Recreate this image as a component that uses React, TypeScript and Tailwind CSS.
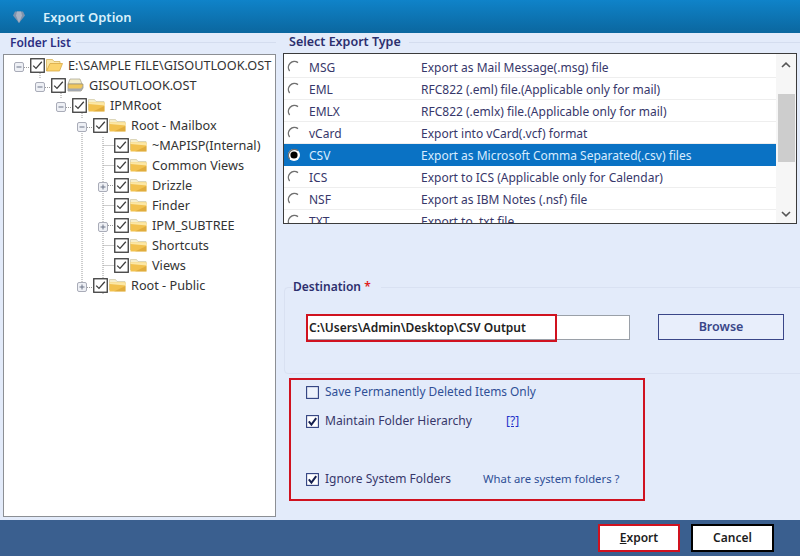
import React from "react"

const treeRows = [
  { label: "E:\\SAMPLE FILE\\GISOUTLOOK.OST", pad: "pl-[10px]", toggle: "minus", icon: "open" },
  { label: "GISOUTLOOK.OST", pad: "pl-[31px]", toggle: "minus", icon: "store" },
  { label: "IPMRoot", pad: "pl-[52px]", toggle: "minus", icon: "folder" },
  { label: "Root - Mailbox", pad: "pl-[73px]", toggle: "minus", icon: "folder" },
  { label: "~MAPISP(Internal)", pad: "pl-[94px]", toggle: "", icon: "folder" },
  { label: "Common Views", pad: "pl-[94px]", toggle: "", icon: "folder" },
  { label: "Drizzle", pad: "pl-[94px]", toggle: "plus", icon: "folder" },
  { label: "Finder", pad: "pl-[94px]", toggle: "", icon: "folder" },
  { label: "IPM_SUBTREE", pad: "pl-[94px]", toggle: "plus", icon: "folder" },
  { label: "Shortcuts", pad: "pl-[94px]", toggle: "", icon: "folder" },
  { label: "Views", pad: "pl-[94px]", toggle: "", icon: "folder" },
  { label: "Root - Public", pad: "pl-[73px]", toggle: "plus", icon: "folder" },
]

const exportTypes = [
  { name: "MSG", text: "Export as Mail Message(.msg) file" },
  { name: "EML", text: "RFC822 (.eml) file.(Applicable only for mail)" },
  { name: "EMLX", text: "RFC822 (.emlx) file.(Applicable only for mail)" },
  { name: "vCard", text: "Export into vCard(.vcf) format" },
  { name: "CSV", text: "Export as Microsoft Comma Separated(.csv) files", selected: true },
  { name: "ICS", text: "Export to ICS (Applicable only for Calendar)" },
  { name: "NSF", text: "Export as IBM Notes (.nsf) file" },
  { name: "TXT", text: "Export to .txt file" },
]

const Toggle = ({ kind }: { kind: string }) => (
  <span className="w-[10px] h-[10px] mt-[4px] shrink-0">
    {kind && (
      <svg width="10" height="10" viewBox="0 0 10 10">
        <rect x="0.5" y="0.5" width="9" height="9" rx="1.5" fill="#eef0f5" stroke="#a9acb8" />
        <path d={kind === "plus" ? "M2.5 5h5M5 2.5v5" : "M2.5 5h5"} stroke="#6d7488" />
      </svg>
    )}
  </span>
)

const TreeCheck = () => (
  <svg width="15" height="15" viewBox="0 0 15 15" className="ml-[6px] shrink-0">
    <rect x="0.75" y="0.75" width="13.5" height="13.5" fill="#fff" stroke="#3c3c3c" strokeWidth="1.3" />
    <path d="M3.2 7.6 6 10.4 11.8 3.8" fill="none" stroke="#3c3c3c" strokeWidth="1.3" />
  </svg>
)

const FolderIcon = ({ kind }: { kind: string }) => {
  if (kind === "store") {
    return (
      <svg width="17" height="14" viewBox="0 0 17 14" className="shrink-0">
        <path d="M3 1h10l2 5H1z" fill="#f3ecc9" stroke="#a5a28c" strokeWidth="0.7" />
        <path d="M1 6h15v4l-2 3H1z" fill="#f0c75c" stroke="#8f8a78" strokeWidth="0.7" />
        <path d="M1 10.5h13l2-2.5v2l-2 3H1z" fill="#a3a8b0" />
      </svg>
    )
  }
  if (kind === "open") {
    return (
      <svg width="17" height="14" viewBox="0 0 17 14" className="shrink-0">
        <path d="M0.5 13V1.5h6l1.5 2h6V6" fill="#fbe6a6" stroke="#d6b25c" strokeWidth="0.8" />
        <path d="M0.5 13 4 5.5h12.5L13.5 13z" fill="#fbd36d" stroke="#d9aa45" strokeWidth="0.8" />
      </svg>
    )
  }
  return (
    <svg width="17" height="14" viewBox="0 0 17 14" className="shrink-0">
      <path d="M0.5 12V1.5h6l1.5 2h8V6H0.5z" fill="#f6eecb" stroke="#cfc9a6" strokeWidth="0.7" />
      <rect x="0.5" y="4.5" width="16" height="9" fill="#f2c14e" />
      <path d="M0.5 4.5h16v3L0.5 6z" fill="#fbe7a6" />
      <path d="M5 13.5h11.5V8z" fill="#c9922b" opacity="0.45" />
    </svg>
  )
}

const Radio = ({ on }: { on?: boolean }) => (
  <svg width="14" height="14" viewBox="0 0 14 14" className="shrink-0">
    <circle cx="7" cy="7" r="6" fill="#fff" />
    <path d="M11 2.6A6 6 0 0 0 2.6 11" fill="none" stroke="#6f6f6f" strokeWidth="1.4" />
    {on && <circle cx="7" cy="7" r="3.6" fill="#000" />}
  </svg>
)

const OptionCheck = ({ checked }: { checked?: boolean }) => (
  <svg width="13" height="13" viewBox="0 0 13 13" className="shrink-0">
    <rect x="0.6" y="0.6" width="11.8" height="11.8" fill={checked ? "#fff" : "#eef3fc"} stroke="#2f3f7f" strokeWidth="1.1" />
    {checked && <path d="M2.8 6.4 5.4 9.6 10.2 3.2" fill="none" stroke="#16204f" strokeWidth="2" />}
  </svg>
)

export default function App() {
  return (
    <div className="w-[800px] h-[556px] flex flex-col overflow-hidden bg-[#e3ebfa] font-['Noto_Sans',sans-serif]">
      {/* Title bar */}
      <div className="h-[33px] shrink-0 flex items-center pl-[12px] bg-gradient-to-b from-[#0f83c9] to-[#0b679f]">
        <svg width="14" height="14" viewBox="0 0 14 14">
          <path d="M3 1.5h8l2 4-6 7.5L1 5.5z" fill="#7f93ad" />
          <path d="M5 1.5h4l1 4-3 7.5-3-7.5z" fill="#a9b3c4" />
        </svg>
        <span className="ml-[17px] mt-[2px] text-[13px] font-semibold text-[#d9f0fb]">Export Option</span>
      </div>

      <div className="flex-1 flex min-h-0">
        {/* Folder list */}
        <div className="w-[283px] shrink-0 pl-[3px] pr-[7px] flex flex-col">
          <div className="h-[21px] shrink-0 flex items-center pl-[7px] pb-[2px] gap-[5px]">
            <span className="text-[12px] font-semibold text-[#2c2f82]">Folder List</span>
            <span className="flex-1 h-px bg-[#d4ddef]" />
          </div>
          <div className="relative flex-1 mb-[3px] bg-white border border-[#8c8f94]">
            <svg width="130" height="240" className="absolute left-0 top-0" fill="none" stroke="#9a9a9a" strokeDasharray="1 1">
              <path d="M20 12.5h6M36 18v6M41 32.5h6M57 38v6M62 52.5h6M78 58v6M83 72.5h6" />
              <path d="M99 82v170M78 78v150M99.5 90.5h11M99.5 110.5h11M104 130.5h6M99.5 150.5h11M104 170.5h6M99.5 190.5h11M99.5 210.5h11M83 232.5h6" />
            </svg>
            <div className="relative">
              {treeRows.map((row) => (
                <div key={row.label} className={`h-[20px] flex items-center ${row.pad}`}>
                  <Toggle kind={row.toggle} />
                  <TreeCheck />
                  <span className="ml-px"><FolderIcon kind={row.icon} /></span>
                  <span className="ml-[5px] text-[12.7px] leading-none whitespace-nowrap text-[#333]">{row.label}</span>
                </div>
              ))}
            </div>
          </div>
        </div>

        {/* Export type and options */}
        <div className="flex-1 min-w-0 flex flex-col">
          <div className="h-[20px] shrink-0 flex items-center pl-[6px] pb-[2px] gap-[8px]">
            <span className="text-[12.5px] font-semibold text-[#2c2f6e]">Select Export Type</span>
            <span className="flex-1 h-px bg-[#d4ddef]" />
          </div>

          <div className="h-[171px] w-[514px] shrink-0 flex bg-white border border-[#3b3b3b] overflow-hidden">
            <div className="flex-1 pt-[2px] min-w-0">
              {exportTypes.map((t) => (
                <div
                  key={t.name}
                  className={`h-[22px] flex items-center pl-[3px] text-[12px] whitespace-nowrap border-b ${
                    t.selected ? "bg-[#0a72c4] border-[#0a72c4] text-[#d8ecff]" : "border-[#eeeeee] text-[#37376a]"
                  }`}
                >
                  <Radio on={t.selected} />
                  <span className="w-[112px] ml-[8px] mt-[2px] shrink-0">{t.name}</span>
                  <span className="mt-[2px]">{t.text}</span>
                </div>
              ))}
            </div>
            <div className="w-[20px] shrink-0 flex flex-col items-center bg-[#f6f6f6] relative">
              <svg width="10" height="6" viewBox="0 0 10 6" className="mt-[8px]" fill="none" stroke="#555" strokeWidth="1.6">
                <path d="M1 5 5 1.2 9 5" />
              </svg>
              <div className="w-[17px] h-[68px] mt-[26px] bg-[#cdcdcd]" />
              <svg width="10" height="6" viewBox="0 0 10 6" className="mt-auto mb-[6px]" fill="none" stroke="#555" strokeWidth="1.6">
                <path d="M1 1 5 4.8 9 1" />
              </svg>
            </div>
          </div>

          <fieldset className="mt-[54px] ml-px w-[508px] h-[96px] shrink-0 border border-[#d9e1f2] rounded-[4px] px-[21px]">
            <legend className="ml-[-13px] pr-[10px] text-[12px] font-semibold text-[#2c2f6e]">
              Destination <span className="text-[#e02020]">*</span>
            </legend>
            <div className="flex items-center mt-[18px]">
              <div className="relative w-[324px] h-[25px] bg-white border border-[#9aa0a8]">
                <div className="absolute left-[-1px] top-[-2px] w-[251px] h-[28px] border-2 border-[#d0121f] flex items-center pl-[1px] text-[12px] font-semibold text-[#222]">
                  C:\Users\Admin\Desktop\CSV Output
                </div>
              </div>
              <button className="ml-[28px] w-[126px] h-[26px] border border-[#3a4688] bg-[#e8eefb] pt-[1px] text-[12.5px] font-semibold text-[#3a4688]">
                Browse
              </button>
            </div>
          </fieldset>

          <div className="mt-[4px] ml-[6px] w-[356px] h-[123px] shrink-0 border-2 border-[#d0121f] flex flex-col pl-[15px] text-[12px] text-[#37376a]">
            <div className="flex items-center gap-[6px] mt-[4px] h-[16px]">
              <OptionCheck />
              <span className="text-[#2f4f96] text-[11.9px]">Save Permanently Deleted Items Only</span>
            </div>
            <div className="flex items-center gap-[6px] mt-[13px] h-[16px]">
              <OptionCheck checked />
              <span className="text-[12.1px]">Maintain Folder Hierarchy</span>
              <a className="ml-[28px] text-[#2231c9] underline">[?]</a>
            </div>
            <div className="flex items-center gap-[6px] mt-[42px] h-[16px]">
              <OptionCheck checked />
              <span>Ignore System Folders</span>
              <a className="ml-[26px] text-[11.3px] text-[#2f4f96]">What are system folders ?</a>
            </div>
          </div>
        </div>
      </div>

      {/* Footer */}
      <div className="h-[36px] shrink-0 flex items-center justify-end pr-[26px] gap-[11px] bg-[#3a5f8f]">
        <button className="w-[82px] h-[28px] bg-white border-2 border-[#d0121f] text-[12px] font-semibold text-[#1c1c1c]">
          <span className="underline">E</span>xport
        </button>
        <button className="w-[83px] h-[28px] bg-white border-2 border-black text-[12px] font-semibold text-[#1c1c1c]">
          Cancel
        </button>
      </div>
    </div>
  )
}
